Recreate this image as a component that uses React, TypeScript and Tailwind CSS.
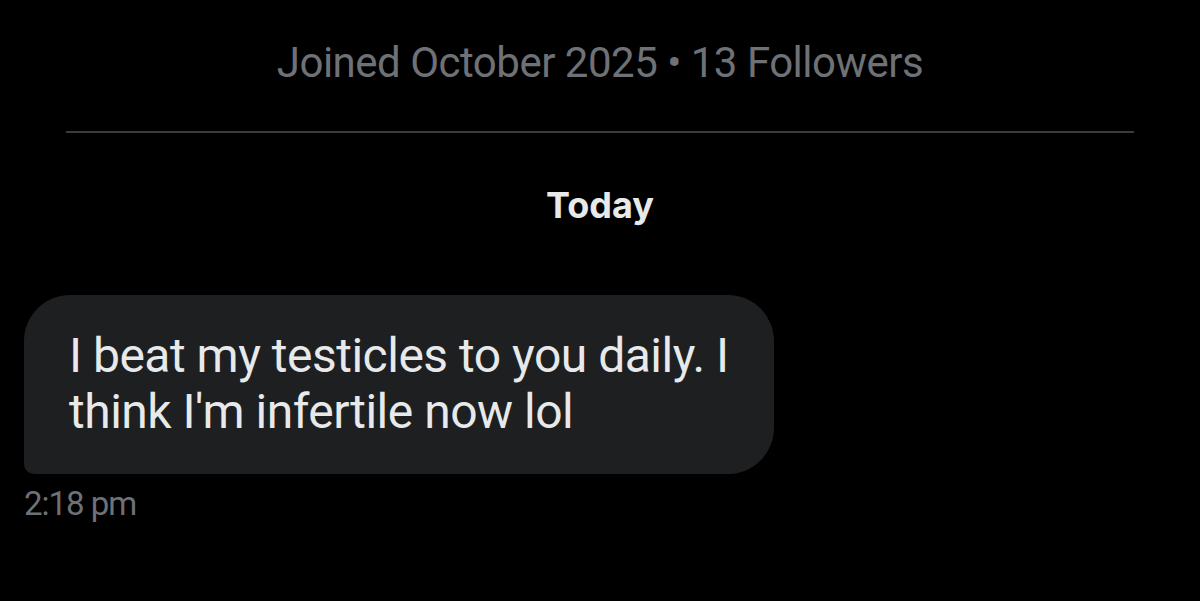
import React from "react";

export default function App() {
  return (
    <div
      className="w-[1200px] h-[601px] bg-black overflow-hidden flex flex-col"
      style={{ fontFamily: "Roboto, 'Noto Sans', sans-serif" }}
    >
      <div className="pt-[39px] text-center text-[42px] leading-[48px] text-[#6e7176] tracking-[-0.5px]">
        Joined October 2025 • 13 Followers
      </div>
      <div className="mx-[66px] mt-[44px] h-[2px] bg-[#3a3b3f]" />
      <div className="mt-[50px] text-center text-[36px] leading-[44px] font-bold text-[#e7e9ea] font-['Inter']">
        Today
      </div>
      <div className="pl-[24px] mt-[68px] flex flex-col items-start">
        <div className="w-[750px] h-[179px] bg-[#1e1f21] rounded-[46px] rounded-bl-[10px] pl-[45px] pt-[33px] text-[48px] leading-[56px] text-[#e7e9ea] tracking-[-0.5px]">
          I beat my testicles to you daily. I<br />think I'm infertile now lol
        </div>
        <div className="mt-[12px] text-[33px] leading-[36px] text-[#6e7176] tracking-[-1px]">
          2:18 pm
        </div>
      </div>
    </div>
  );
}
